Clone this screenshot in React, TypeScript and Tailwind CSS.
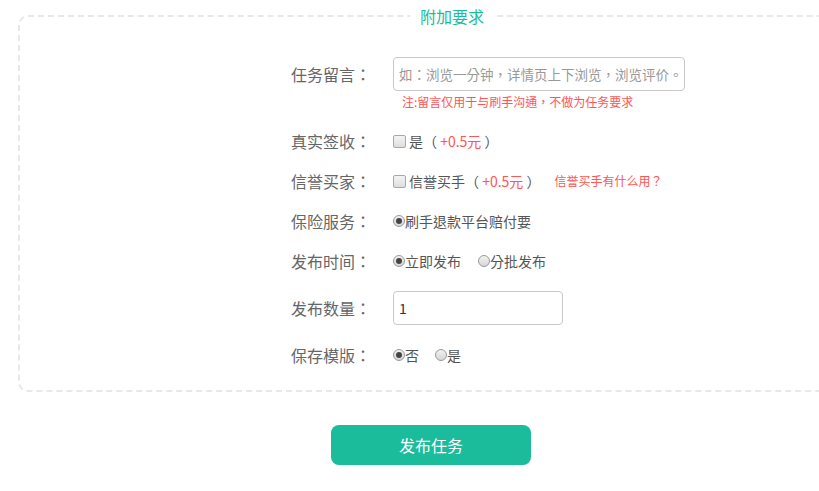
const Check = () => (
  <span className="inline-block w-[13px] h-[13px] rounded-[2px] border border-[#a8a8a8] bg-gradient-to-b from-[#f4f4f4] to-[#dedede] shrink-0" />
);

const Radio = ({ checked = false }: { checked?: boolean }) => (
  <span className="inline-flex items-center justify-center w-[12px] h-[12px] rounded-full border border-[#9a9a9a] bg-gradient-to-b from-[#f2f2f2] to-[#d6d6d6] shrink-0">
    {checked && <span className="block w-[6px] h-[6px] rounded-full bg-[#444]" />}
  </span>
);

const Label = ({ children }: { children: string }) => (
  <div className="w-[110px] shrink-0 text-right text-[16px] text-[#666] mr-[22px]">{children}</div>
);

const App = () => {
  return (
    <div
      className="w-[819px] h-[491px] overflow-hidden bg-white"
      style={{ fontFamily: '"Noto Sans CJK TC", "Noto Sans CJK SC", "Noto Sans", sans-serif' }}
    >
      <fieldset className="ml-[18px] mt-[4px] w-[868px] border-2 border-dashed border-[#e8e8e8] rounded-[10px] pt-[29px] pb-[15px]">
        <legend className="mx-auto px-[10px] text-[16px] leading-6 text-[#1abc9c]">附加要求</legend>

        <div className="pl-[241px]">
          {/* 任务留言 */}
          <div className="flex items-start">
            <div className="h-[34px] leading-[34px]">
              <Label>任务留言：</Label>
            </div>
            <div>
              <input
                className="w-[292px] h-[34px] border border-[#c8c8c8] rounded-[4px] px-[5px] text-[13.5px] text-[#555] placeholder:text-[#999] outline-none"
                placeholder="如：浏览一分钟，详情页上下浏览，浏览评价。"
              />
              <p className="mt-[2px] pl-[9px] text-[12px] leading-[18px] text-[#f55]">注:留言仅用于与刷手沟通，不做为任务要求</p>
            </div>
          </div>

          {/* 真实签收 */}
          <div className="flex items-center h-[40px] mt-[10px]">
            <Label>真实签收：</Label>
            <div className="flex items-center text-[14px] text-[#555]">
              <Check />
              <span className="ml-[3px]">是（ <span className="text-[#f55]">+0.5元</span> ）</span>
            </div>
          </div>

          {/* 信誉买家 */}
          <div className="flex items-center h-[40px]">
            <Label>信誉买家：</Label>
            <div className="flex items-center text-[14px] text-[#555]">
              <Check />
              <span className="ml-[3px]">信誉买手（ <span className="text-[#f55]">+0.5元</span> ）</span>
              <a className="ml-[14px] text-[12px] text-[#f55]">信誉买手有什么用？</a>
            </div>
          </div>

          {/* 保险服务 */}
          <div className="flex items-center h-[40px]">
            <Label>保险服务：</Label>
            <div className="flex items-center text-[14px] text-[#555]">
              <Radio checked />
              <span>刷手退款平台赔付要</span>
            </div>
          </div>

          {/* 发布时间 */}
          <div className="flex items-center h-[40px]">
            <Label>发布时间：</Label>
            <div className="flex items-center text-[14px] text-[#555]">
              <Radio checked />
              <span>立即发布</span>
              <span className="ml-[17px]"><Radio /></span>
              <span>分批发布</span>
            </div>
          </div>

          {/* 发布数量 */}
          <div className="flex items-center h-[54px]">
            <Label>发布数量：</Label>
            <input
              className="w-[170px] h-[34px] border border-[#c8c8c8] rounded-[4px] px-[5px] text-[14px] text-[#333] outline-none"
              defaultValue="1"
            />
          </div>

          {/* 保存模版 */}
          <div className="flex items-center h-[40px]">
            <Label>保存模版：</Label>
            <div className="flex items-center text-[14px] text-[#555]">
              <Radio checked />
              <span>否</span>
              <span className="ml-[16px]"><Radio /></span>
              <span>是</span>
            </div>
          </div>
        </div>
      </fieldset>

      <button className="ml-[331px] mt-[33px] w-[200px] h-[40px] rounded-[8px] bg-[#1abc9c] text-white text-[16px]">
        发布任务
      </button>
    </div>
  );
};

export default App;
